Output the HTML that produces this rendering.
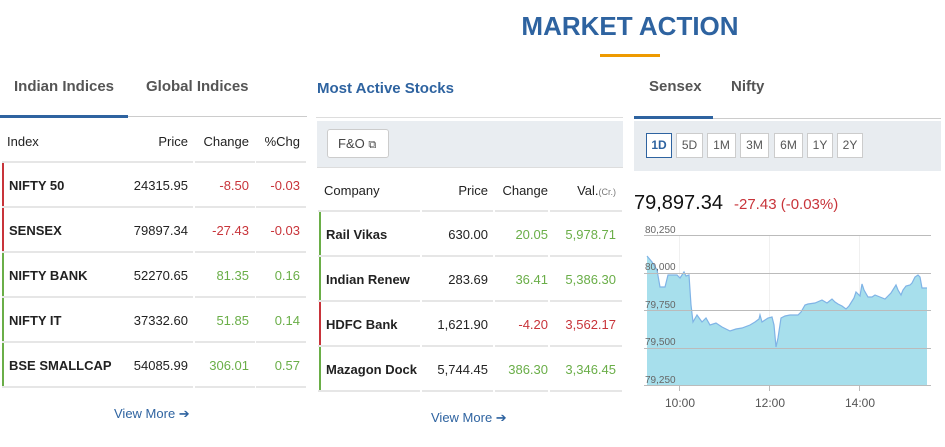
<!DOCTYPE html>
<html><head><meta charset="utf-8"><style>
*{margin:0;padding:0;box-sizing:border-box}
body{width:945px;height:447px;background:#fff;font-family:"Liberation Sans",sans-serif;position:relative;overflow:hidden;color:#222}
.a{position:absolute;white-space:nowrap}
.blue{color:#2e63a0}
.red{color:#c8343a}
.grn{color:#6aae48}
.tab{font-size:15px;color:#555;font-weight:bold}
.hd{font-size:13px;color:#222}
.cell{font-size:13px}
.r{text-align:right}
.b{font-weight:bold;color:#222}
.hl{position:absolute;height:2px;background:#e6e6e6}
.btn{position:absolute;top:133px;height:25px;border:1px solid #ccc;background:#fff;font-size:12px;color:#555;text-align:center;line-height:23px}
</style></head><body>
<div class="a blue" style="left:0;width:1260px;text-align:center;top:11px;font-size:26px;font-weight:bold">MARKET ACTION</div>
<div class="a" style="left:600px;top:54px;width:60px;height:3px;background:#ee9a00"></div>

<!-- LEFT -->
<div class="a tab blue" style="left:14px;top:78px">Indian Indices</div>
<div class="a tab" style="left:146px;top:78px">Global Indices</div>
<div class="a" style="left:0;top:116px;width:307px;height:1px;background:#ccc"></div>
<div class="a" style="left:0;top:115px;width:128px;height:3px;background:#2e63a0"></div>
<div class="a hd" style="left:7px;top:134px">Index</div>
<div class="a hd r" style="left:120px;width:68px;top:134px">Price</div>
<div class="a hd r" style="left:195px;width:54px;top:134px">Change</div>
<div class="a hd r" style="left:256px;width:44px;top:134px">%Chg</div>
<div id="lt"></div>
<div class="a blue" style="left:114px;top:406px;font-size:13px">View More ➔</div>

<!-- MIDDLE -->
<div class="a blue" style="left:317px;top:80px;font-size:15px;font-weight:bold">Most Active Stocks</div>
<div class="a" style="left:316px;top:117px;width:307px;height:1px;background:#ddd"></div>
<div class="a" style="left:317px;top:121px;width:306px;height:47px;background:#e9edf1;border-bottom:1px solid #ddd"></div>
<div class="a" style="left:327px;top:129px;width:62px;height:29px;background:#fff;border:1px solid #ccc;border-radius:3px;font-size:13px;color:#444;line-height:27px;padding-left:10px">F&amp;O <span style="font-size:11px">⧉</span></div>
<div class="a hd" style="left:324px;top:183px">Company</div>
<div class="a hd r" style="left:422px;width:66px;top:183px">Price</div>
<div class="a hd r" style="left:495px;width:53px;top:183px">Change</div>
<div class="a hd r" style="left:550px;width:66px;top:183px">Val.<span style="font-size:9px;color:#777">(Cr.)</span></div>
<div id="mt"></div>
<div class="a blue" style="left:431px;top:410px;font-size:13px">View More ➔</div>

<!-- RIGHT -->
<div class="a tab blue" style="left:649px;top:78px">Sensex</div>
<div class="a tab" style="left:731px;top:78px">Nifty</div>
<div class="a" style="left:634px;top:118px;width:307px;height:1px;background:#ccc"></div>
<div class="a" style="left:634px;top:116px;width:79px;height:3px;background:#2e63a0"></div>
<div class="a" style="left:634px;top:121px;width:307px;height:50px;background:#e8ecf0"></div>
<div class="btn" style="left:646px;width:26px;border-color:#2e63a0;color:#2e63a0;font-weight:bold">1D</div>
<div class="btn" style="left:676px;width:27px">5D</div>
<div class="btn" style="left:707px;width:29px">1M</div>
<div class="btn" style="left:740px;width:29px">3M</div>
<div class="btn" style="left:774px;width:29px">6M</div>
<div class="btn" style="left:807px;width:26px">1Y</div>
<div class="btn" style="left:837px;width:26px">2Y</div>
<div class="a" style="left:634px;top:192px;font-size:20px;color:#111">79,897.34</div>
<div class="a red" style="left:734px;top:196px;font-size:15px"><b style="font-weight:normal">-27.43</b> (-0.03%)</div>
<svg class="a" style="left:0;top:0" width="945" height="447">
<g stroke="#f0f0f0" stroke-width="1"><line x1="679.5" y1="235" x2="679.5" y2="385"/><line x1="769.5" y1="235" x2="769.5" y2="385"/><line x1="859.5" y1="235" x2="859.5" y2="385"/></g>
<polygon fill="#a7dfec" points="647,385 647,256 652,262 657,270 660,287 665,287 668,275 673,275 677,275 680,278 684,272 686,276 689,275 691,305 693,322 697,315 702,322 706,318 710,325 716,323 722,327 730,331 736,329 742,328 750,325 755,322 759,319 760,315 762,322 768,318 772,317 774,325 776,347 778,338 781,318 785,316 790,315 798,315 801,312 805,305 808,304 815,303 822,300 827,303 832,299 835,302 838,304 842,306 846,309 849,306 854,298 856,292 860,296 862,284 864,290 868,297 872,297 875,295 880,297 885,299 888,296 891,293 896,285 898,290 901,295 903,290 906,286 910,285 912,283 915,277 918,275 920,277 922,288 927,288 927,385"/>
<polyline fill="none" stroke="#7fb3e6" stroke-width="1.2" points="647,256 652,262 657,270 660,287 665,287 668,275 673,275 677,275 680,278 684,272 686,276 689,275 691,305 693,322 697,315 702,322 706,318 710,325 716,323 722,327 730,331 736,329 742,328 750,325 755,322 759,319 760,315 762,322 768,318 772,317 774,325 776,347 778,338 781,318 785,316 790,315 798,315 801,312 805,305 808,304 815,303 822,300 827,303 832,299 835,302 838,304 842,306 846,309 849,306 854,298 856,292 860,296 862,284 864,290 868,297 872,297 875,295 880,297 885,299 888,296 891,293 896,285 898,290 901,295 903,290 906,286 910,285 912,283 915,277 918,275 920,277 922,288 927,288"/>
<g stroke="#bbb" stroke-width="1"><line x1="644" y1="235.5" x2="931" y2="235.5"/><line x1="644" y1="273.5" x2="931" y2="273.5"/><line x1="644" y1="310.5" x2="931" y2="310.5"/><line x1="644" y1="348.5" x2="931" y2="348.5"/><line x1="644" y1="385.5" x2="931" y2="385.5"/>
<line x1="679.5" y1="385" x2="679.5" y2="391"/><line x1="769.5" y1="385" x2="769.5" y2="391"/><line x1="859.5" y1="385" x2="859.5" y2="391"/></g>
<g font-family="Liberation Sans" font-size="10" fill="#666"><text x="645" y="233">80,250</text><text x="645" y="270">80,000</text><text x="645" y="308">79,750</text><text x="645" y="345">79,500</text><text x="645" y="383">79,250</text></g>
<g font-family="Liberation Sans" font-size="12" fill="#555" text-anchor="middle"><text x="680" y="407">10:00</text><text x="770" y="407">12:00</text><text x="860" y="407">14:00</text></g>
</svg>
<script>
var L=[["NIFTY 50","24315.95","-8.50","-0.03",0],["SENSEX","79897.34","-27.43","-0.03",0],["NIFTY BANK","52270.65","81.35","0.16",1],["NIFTY IT","37332.60","51.85","0.14",1],["BSE SMALLCAP","54085.99","306.01","0.57",1]];
var h="";
[[2,118],[120,73],[195,60],[256,50]].forEach(function(c){h+='<div class="hl" style="left:'+c[0]+'px;width:'+c[1]+'px;top:161px"></div>';});
L.forEach(function(r,i){var t=162+i*45,c=r[4]?'grn':'red',bc=r[4]?'#6aae48':'#c8343a';
h+='<div class="a" style="left:2px;top:'+(t+1)+'px;width:2px;height:43px;background:'+bc+'"></div>';
h+='<div class="a cell b" style="left:9px;top:'+(t+16)+'px">'+r[0]+'</div>';
h+='<div class="a cell r" style="left:120px;width:68px;top:'+(t+16)+'px">'+r[1]+'</div>';
h+='<div class="a cell r '+c+'" style="left:195px;width:54px;top:'+(t+16)+'px">'+r[2]+'</div>';
h+='<div class="a cell r '+c+'" style="left:256px;width:44px;top:'+(t+16)+'px">'+r[3]+'</div>';
[[2,118],[120,73],[195,60],[256,50]].forEach(function(cc){h+='<div class="hl" style="left:'+cc[0]+'px;width:'+cc[1]+'px;top:'+(t+44)+'px"></div>';});});
document.getElementById("lt").innerHTML=h;
var M=[["Rail Vikas","630.00","20.05","5,978.71",1],["Indian Renew","283.69","36.41","5,386.30",1],["HDFC Bank","1,621.90","-4.20","3,562.17",0],["Mazagon Dock","5,744.45","386.30","3,346.45",1]];
h="";var C=[[318,102],[422,71],[495,53],[550,72]];
C.forEach(function(c){h+='<div class="hl" style="left:'+c[0]+'px;width:'+c[1]+'px;top:210px"></div>';});
M.forEach(function(r,i){var t=211+i*45,c=r[4]?'grn':'red',bc=r[4]?'#6aae48':'#c8343a';
h+='<div class="a" style="left:319px;top:'+(t+1)+'px;width:2px;height:43px;background:'+bc+'"></div>';
h+='<div class="a cell b" style="left:326px;top:'+(t+16)+'px">'+r[0]+'</div>';
h+='<div class="a cell r" style="left:422px;width:66px;top:'+(t+16)+'px">'+r[1]+'</div>';
h+='<div class="a cell r '+c+'" style="left:495px;width:53px;top:'+(t+16)+'px">'+r[2]+'</div>';
h+='<div class="a cell r '+c+'" style="left:550px;width:66px;top:'+(t+16)+'px">'+r[3]+'</div>';
C.forEach(function(cc){h+='<div class="hl" style="left:'+cc[0]+'px;width:'+cc[1]+'px;top:'+(t+44)+'px"></div>';});});
document.getElementById("mt").innerHTML=h;
</script>
</body></html>
